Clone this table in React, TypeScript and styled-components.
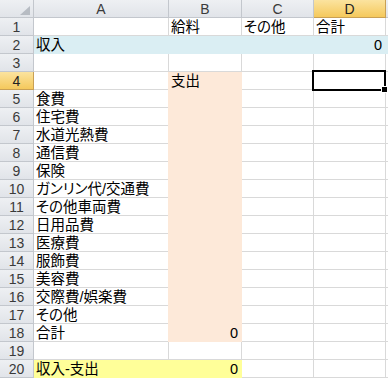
import React from 'react';
import styled, { createGlobalStyle, css } from 'styled-components';

const GlobalStyle = createGlobalStyle`
  html, body {
    margin: 0;
    padding: 0;
    background: #fff;
  }
  body {
    overflow: hidden;
  }
`;

const GRID = '#d9d9d9';
const HEAD_LINE = '#c3c7cd';
const BLUE = '#daeef3';
const PEACH = '#fde9d9';
const YELLOW = '#ffff99';

const Sheet = styled.div`
  display: grid;
  grid-template-columns: 34px 135px 73px 72px 72px 1fr;
  grid-auto-rows: 18px;
  width: 388px;
  height: 378px;
  overflow: hidden;
  font-family: "Liberation Sans", "Noto Sans CJK JP", sans-serif;
`;

const HeaderCell = styled.div<{ $active?: boolean }>`
  box-sizing: border-box;
  position: relative;
  display: flex;
  align-items: center;
  justify-content: center;
  border-right: 1px solid ${HEAD_LINE};
  border-bottom: 1px solid ${HEAD_LINE};
  background: linear-gradient(#eef0f3, #e1e4e9);
  color: #3a3a3a;
  font-size: 14px;
  line-height: 16px;
  ${p =>
    p.$active &&
    css`
      background: linear-gradient(#fbe39f, #f5c95c);
      border-color: #c9a054;
      color: #222;
    `}
`;

const CornerMark = styled.svg`
  position: absolute;
  right: 3px;
  bottom: 2px;
`;

const Cell = styled.div<{ $fill?: string; $align?: 'left' | 'right'; $bleed?: boolean }>`
  box-sizing: border-box;
  position: relative;
  display: flex;
  align-items: flex-end;
  justify-content: ${p => (p.$align === 'right' ? 'flex-end' : 'flex-start')};
  padding: 0 3px 0 2px;
  border-right: 1px solid ${p => p.$fill ?? GRID};
  border-bottom: 1px solid ${p => p.$fill ?? GRID};
  background: ${p => p.$fill ?? '#fff'};
  box-shadow: ${p => (p.$bleed && p.$fill ? `-1px 0 0 ${p.$fill}` : 'none')};
  color: #000;
  font-size: 14.5px;
  line-height: 16px;
  white-space: nowrap;
  font-feature-settings: "palt";
`;

const Selection = styled.div`
  position: absolute;
  top: -2px;
  left: -2px;
  right: -1px;
  bottom: -2px;
  border: 2px solid #000;
  z-index: 3;
  pointer-events: none;

  &::after {
    content: '';
    position: absolute;
    right: -4px;
    bottom: -4px;
    width: 5px;
    height: 5px;
    background: #000;
    border: 1px solid #fff;
  }
`;

type CellData = {
  text?: string;
  fill?: string;
  align?: 'left' | 'right';
  bleed?: boolean;
  selected?: boolean;
};

const columns = ['A', 'B', 'C', 'D', ''];

const labels = [
  '', '収入', '', '',
  '食費', '住宅費', '水道光熱費', '通信費', '保険', 'ガンリン代/交通費',
  'その他車両費', '日用品費', '医療費', '服飾費', '美容費', '交際費/娯楽費',
  'その他', '合計', '', '収入-支出',
];

function buildRow(row: number): CellData[] {
  const cells: CellData[] = [{ text: labels[row - 1] }, {}, {}, {}, {}];

  if (row === 1) {
    cells[1].text = '給料';
    cells[2].text = 'その他';
    cells[3].text = '合計';
  }
  if (row === 2) {
    cells.forEach(c => (c.fill = BLUE));
    cells[3].text = '0';
    cells[3].align = 'right';
  }
  if (row >= 4 && row <= 18) {
    cells[1] = { fill: PEACH, bleed: true };
    if (row === 4) cells[1].text = '支出';
    if (row === 18) {
      cells[1].text = '0';
      cells[1].align = 'right';
    }
  }
  if (row === 4) cells[3].selected = true;
  if (row === 20) {
    cells[0].fill = YELLOW;
    cells[1] = { fill: YELLOW, text: '0', align: 'right' };
  }
  return cells;
}

const rows = Array.from({ length: 20 }, (_, i) => i + 1);

function App() {
  return (
    <>
      <GlobalStyle />
      <Sheet>
        <HeaderCell>
          <CornerMark width="10" height="9" viewBox="0 0 10 9">
            <polygon points="10,0 10,9 0,9" fill="#b7bcc3" />
          </CornerMark>
        </HeaderCell>
        {columns.map((col, i) => (
          <HeaderCell key={`h${i}`} $active={col === 'D'}>{col}</HeaderCell>
        ))}
        {rows.map(row => (
          <React.Fragment key={row}>
            <HeaderCell $active={row === 4}>{row}</HeaderCell>
            {buildRow(row).map((cell, i) => (
              <Cell
                key={i}
                $fill={cell.fill}
                $align={cell.align}
                $bleed={cell.bleed}
                style={cell.selected ? { zIndex: 2 } : undefined}
              >
                {cell.text}
                {cell.selected && <Selection />}
              </Cell>
            ))}
          </React.Fragment>
        ))}
      </Sheet>
    </>
  );
}

export default App;
